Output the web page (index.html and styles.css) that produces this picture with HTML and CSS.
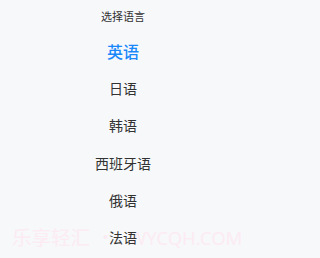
FILE: index.html
```html
<!DOCTYPE html>
<html lang="zh">
<head>
<meta charset="utf-8">
<link rel="stylesheet" href="styles.css">
</head>
<body>
<div class="sheet">
  <div class="title">选择语言</div>
  <ul class="list">
    <li class="item active">英语</li>
    <li class="item">日语</li>
    <li class="item">韩语</li>
    <li class="item">西班牙语</li>
    <li class="item">俄语</li>
    <li class="item">法语</li>
  </ul>
  <div class="watermark"><span class="wm-cn">乐享轻汇</span><span class="wm-dot">·</span><span class="wm-en">WYCQH.COM</span></div>
</div>
</body>
</html>
```
FILE: styles.css
```css
html, body {
  margin: 0;
  padding: 0;
  background: #f7f8fa;
}
.sheet {
  position: relative;
  width: 246px;
  height: 258px;
  overflow: hidden;
  background: #f7f8fa;
  font-family: "Noto Sans CJK SC", "Noto Sans", sans-serif;
  color: #323233;
}
.title {
  height: 32px;
  display: flex;
  align-items: center;
  justify-content: center;
  font-size: 11px;
  color: #323233;
}
.list {
  list-style: none;
  margin: 0;
  padding: 0;
}
.item {
  height: 37.3px;
  display: flex;
  align-items: center;
  justify-content: center;
  font-size: 14px;
  color: #323233;
  position: relative;
  z-index: 1;
}
.item.active {
  font-size: 16px;
  color: #1989fa;
  font-weight: 500;
}
.watermark {
  position: absolute;
  left: 12px;
  top: 224px;
  display: flex;
  align-items: baseline;
  line-height: 26px;
  white-space: nowrap;
  color: #fcebf2;
  z-index: 0;
}
.wm-cn {
  font-size: 19.5px;
}
.wm-dot {
  font-size: 19px;
  margin-left: 6px;
}
.wm-en {
  font-family: "Noto Sans", sans-serif;
  font-size: 18.5px;
  margin-left: 14px;
}
```
